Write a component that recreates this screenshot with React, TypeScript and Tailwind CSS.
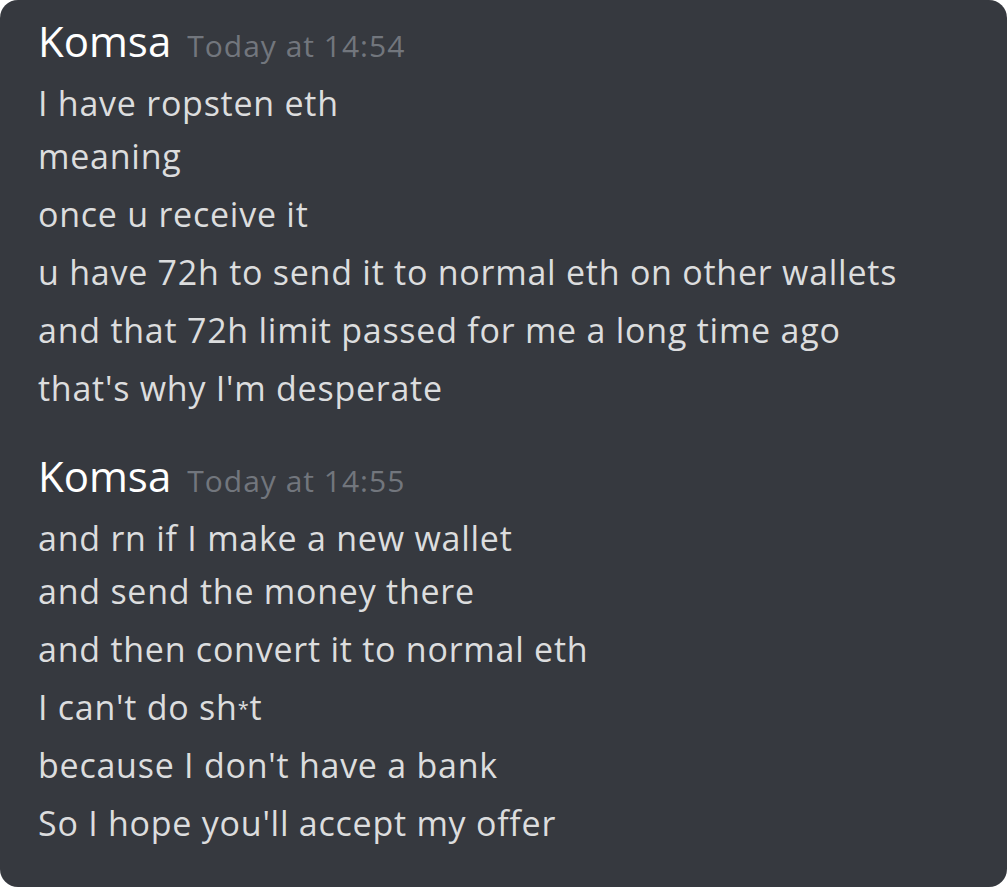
const groups = [
  {
    time: 'Today at 14:54',
    lines: [
      'I have ropsten eth',
      'meaning',
      'once u receive it',
      'u have 72h to send it to normal eth on other wallets',
      'and that 72h limit passed for me a long time ago',
      "that's why I'm desperate",
    ],
  },
  {
    time: 'Today at 14:55',
    lines: [
      'and rn if I make a new wallet',
      'and send the money there',
      'and then convert it to normal eth',
      'SHT',
      "because I don't have a bank",
      "So I hope you'll accept my offer",
    ],
  },
];

function Line({ text }: { text: string }) {
  return (
    <div className="h-[58px] leading-[58px] whitespace-nowrap">
      {text === 'SHT' ? (
        <>
          I can't do sh<span className="text-[20px] relative -top-[4px]">*</span>t
        </>
      ) : (
        text
      )}
    </div>
  );
}

export default function App() {
  return (
    <div className="w-[1007px] h-[887px] bg-white">
      <div
        className="w-full h-full rounded-[18px] bg-[#36393f] pl-[38px] pt-[14px]"
        style={{ fontFamily: '"Open Sans", sans-serif' }}
      >
        {groups.map((g, gi) => (
          <div key={gi} className={gi === 0 ? '' : 'mt-[32px]'}>
            <div className="flex items-baseline gap-[16px] h-[60px] leading-[54px]">
              <span className="text-white text-[42px] font-medium">Komsa</span>
              <span className="text-[#72767d] text-[30px] tracking-[1px]">{g.time}</span>
            </div>
            <div className="text-[#dcddde] text-[34px] tracking-[0.75px]">
              {g.lines.map((l, i) => (
                <div key={i} className={i === 1 ? '-mt-[5px]' : ''}>
                  <Line text={l} />
                </div>
              ))}
            </div>
          </div>
        ))}
      </div>
    </div>
  );
}
